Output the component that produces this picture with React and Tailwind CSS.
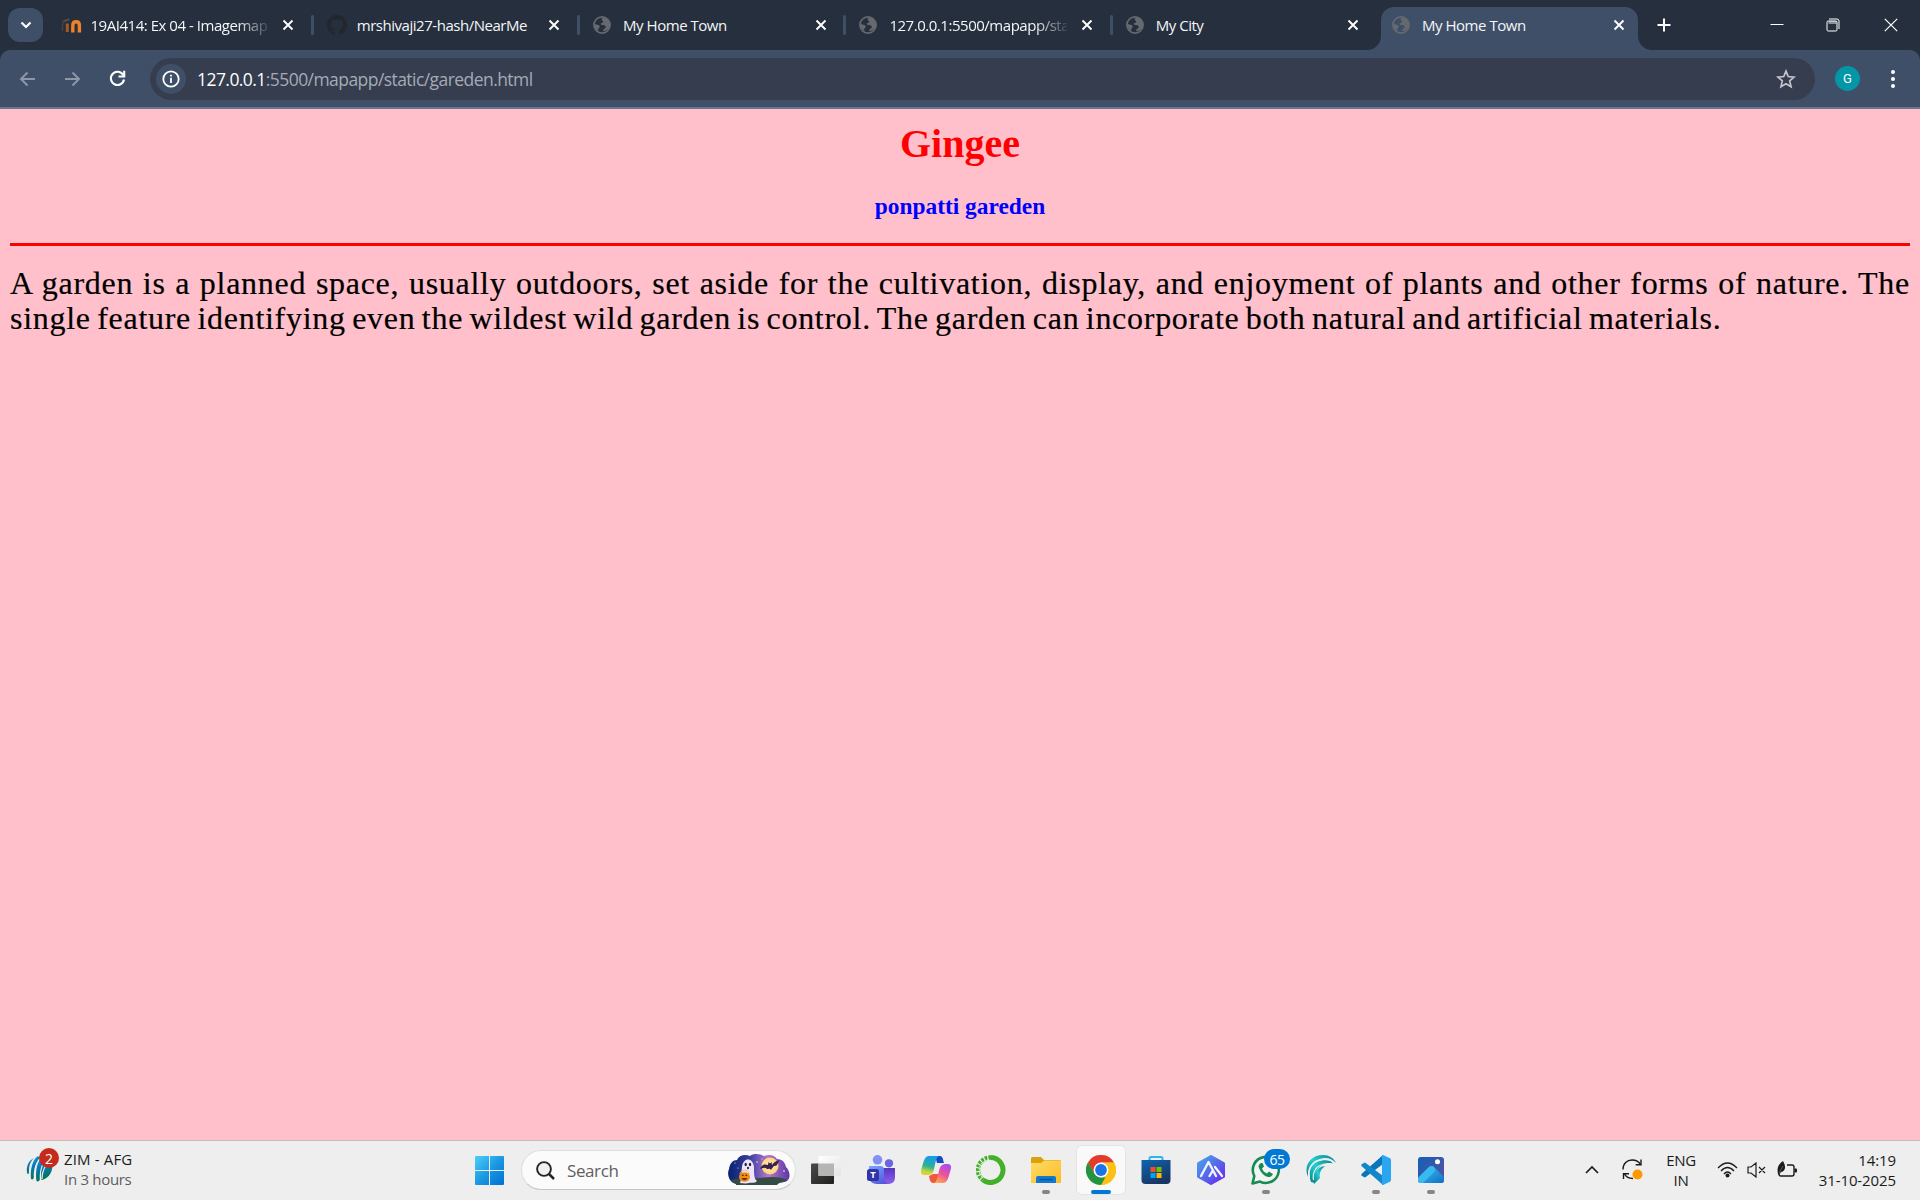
import React from "react";

const tabs = [
  { title: "19AI414: Ex 04 - Imagemap", icon: "moodle", fade: true },
  { title: "mrshivaji27-hash/NearMe", icon: "github" },
  { title: "My Home Town", icon: "globe" },
  { title: "127.0.0.1:5500/mapapp/sta", icon: "globe", fade: true },
  { title: "My City", icon: "globe" },
  { title: "My Home Town", icon: "globe", active: true },
];

function Globe() {
  return (
    <svg width="18" height="18" viewBox="0 0 18 18">
      <circle cx="9" cy="9" r="8.1" fill="none" stroke="#66696e" strokeWidth="1.7" />
      <path d="M10.2 1.2C8.4 2.4 8 3.6 9.3 4.5c1.4.9 1.2 2.2-.4 2.4-1.6.2-1.5 1.4-.4 1.9 1.6.6 3.4.2 4.1 1.5.5 1-.1 2-1.1 2.3-1.2.4-.9 1.6-1.4 2.6C14 14.7 17 12.5 17 9c0-4-2.8-7.2-6.8-7.8Z" fill="#66696e" />
      <path d="M1.4 8.2c2 .1 4.2.4 5 1.6.7 1.1.2 2-.7 2.5-.8.5-.3 1.500-.2 2.7C2.800 13.800 1.200 11.300 1.400 8.200Z" fill="#66696e" />
    </svg>
  );
}

function Favicon({ kind }) {
  if (kind === "moodle")
    return (
      <svg width="21" height="17" viewBox="0 0 21 17">
        <path d="M1.500 14V8.500c0-2 .6-3.500 2-4" fill="none" stroke="#46403f" strokeWidth="1.600" />
        <path d="M1 3.800 7.500 1.500l1.500 1.500-4.500 1.800Z" fill="#55504f" />
        <path d="M6.300 15V6.500" stroke="#a85624" strokeWidth="3" />
        <path d="M11.800 15.500V8.500c0-2.300 1.200-3.700 3.300-3.700s3.300 1.400 3.300 3.700v7" fill="none" stroke="#ef8127" strokeWidth="3.400" />
      </svg>
    );
  if (kind === "github")
    return (
      <svg width="20" height="20" viewBox="0 0 16 16">
        <path fill="#22272e" d="M8 0C3.58 0 0 3.58 0 8c0 3.54 2.290 6.530 5.470 7.590.4.070.550-.170.550-.380 0-.190-.010-.820-.010-1.490-2.010.370-2.530-.490-2.690-.940-.090-.230-.480-.940-.820-1.130-.280-.150-.680-.520-.010-.530.630-.010 1.080.580 1.230.820.720 1.210 1.870.870 2.330.660.070-.520.280-.870.510-1.070-1.780-.2-3.640-.890-3.640-3.950 0-.870.310-1.590.820-2.150-.080-.2-.360-1.020.080-2.120 0 0 .670-.210 2.200.820.640-.180 1.320-.270 2-.270s1.360.090 2 .270c1.530-1.040 2.200-.820 2.200-.820.440 1.100.160 1.920.080 2.120.510.560.820 1.270.820 2.150 0 3.070-1.870 3.750-3.650 3.950.290.250.540.730.540 1.480 0 1.070-.010 1.930-.010 2.200 0 .210.150.460.550.380A8.01 8.010 0 0 0 16 8c0-4.420-3.580-8-8-8Z" />
      </svg>
    );
  return <Globe />;
}

function Tab({ tab }) {
  return (
    <div className="relative flex h-full w-[266.3px] shrink-0 items-end">
      {tab.active && (
        <>
          <div className="absolute top-[7px] left-[3.5px] h-[43px] w-[257.500px] rounded-t-[13px] bg-[#404f68]" />
          <svg className="absolute bottom-0 left-[-10.500px]" width="14" height="14"><path d="M14 0A14 14 0 0 1 0 14H14Z" fill="#404f68" /></svg>
          <svg className="absolute bottom-0 left-[261px]" width="14" height="14"><path d="M0 0A14 14 0 0 0 14 14H0Z" fill="#404f68" /></svg>
        </>
      )}
      <div className="relative flex h-[50px] w-full items-center pl-[14.500px]">
        <span className="flex w-[30px] shrink-0 items-center"><Favicon kind={tab.icon} /></span>
        <span className={"w-[178px] overflow-hidden whitespace-nowrap text-[15px] tracking-[-0.47px] text-[#f3f5f8] " + (tab.fade ? "[mask-image:linear-gradient(to_right,black_82%,transparent_102%)]" : "")}>
          {tab.title}
        </span>
        <svg className="ml-[13.500px]" width="12" height="12" viewBox="0 0 12 12"><path d="m1.500 1.500 9 9m0-9-9 9" stroke="#fff" strokeWidth="1.900" /></svg>
      </div>
    </div>
  );
}

function Separator() {
  return <div className="-mx-[1.500px] h-5 w-[3px] shrink-0 rounded-full bg-[#404f68]" />;
}

function BrowserChrome() {
  return (
    <header className="h-[109px] bg-[#262f3d]">
      <div className="flex h-[50px] items-center pl-2">
        <button className="flex h-[34px] w-[35px] shrink-0 items-center justify-center rounded-[12px] bg-[#404f68]">
          <svg width="12" height="8" viewBox="0 0 12 8"><path d="m1.500 1.500 4.500 4.500 4.500-4.500" fill="none" stroke="#fff" strokeWidth="2.200" /></svg>
        </button>
        <div className="ml-[3px] flex h-full items-center">
          {tabs.map((t, i) => (
            <React.Fragment key={i}>
              <Tab tab={t} />
              {i < 4 && <Separator />}
            </React.Fragment>
          ))}
        </div>
        <svg className="ml-[13px] shrink-0" width="14" height="14" viewBox="0 0 14 14"><path d="M7 .5v13M.5 7h13" stroke="#fff" strokeWidth="2" /></svg>
        <div className="ml-auto flex items-center pr-[22px]">
          <svg className="mr-[42px]" width="14" height="14" viewBox="0 0 14 14"><path d="M.5 6.500h13" stroke="#fff" /></svg>
          <svg className="mr-[44px]" width="14" height="14" viewBox="0 0 14 14">
            <rect x="2.500" y="3" width="8" height="3" fill="#8b919b" />
            <rect x="1" y="3" width="10" height="10" rx="1.200" fill="none" stroke="#fff" />
            <path d="M3 1h8a2 2 0 0 1 2 2v8" fill="none" stroke="#fff" />
          </svg>
          <svg width="14" height="14" viewBox="0 0 14 14"><path d="m.8.8 12.400 12.400m0-12.400L.8 13.200" stroke="#fff" strokeWidth="1.200" /></svg>
        </div>
      </div>
      <div className="flex h-[59px] items-center rounded-t-[10px] border-b-2 border-[#69788f] bg-[#404f68]">
        <svg className="ml-[19px]" width="17" height="16" viewBox="0 0 17 16"><path d="M16 8H2m6.500-6.500L2 8l6.500 6.500" fill="none" stroke="#8d97a6" strokeWidth="1.900" /></svg>
        <svg className="ml-[28px]" width="17" height="16" viewBox="0 0 17 16"><path d="M1 8h14M8.500 1.500 15 8l-6.500 6.500" fill="none" stroke="#8d97a6" strokeWidth="1.900" /></svg>
        <svg className="ml-[28px]" width="17" height="17" viewBox="0 0 17 17">
          <path d="M14.300 5.200A6.600 6.600 0 1 0 15 9.500" fill="none" stroke="#fff" strokeWidth="2.100" />
          <path d="M15.200.8V6.500H9.500" fill="none" stroke="#fff" strokeWidth="2.100" />
        </svg>
        <div className="ml-[24px] flex h-[42px] w-[1665px] items-center rounded-full bg-[#353d4e]">
          <span className="ml-[6px] flex size-[30px] items-center justify-center rounded-full bg-[#404f68]">
            <svg width="18" height="18" viewBox="0 0 18 18">
              <circle cx="9" cy="9" r="7.700" fill="none" stroke="#fff" strokeWidth="1.800" />
              <path d="M9 7.800v5.200M9 4.700v1.800" stroke="#fff" strokeWidth="1.800" />
            </svg>
          </span>
          <span className="mt-[2px] ml-[11px] text-[17.500px] tracking-[-0.56px] whitespace-nowrap text-[#a5abb6]"><span className="text-white">127.0.0.1</span>:5500/mapapp/static/gareden.html</span>
          <svg className="mr-[19px] ml-auto" width="20" height="20" viewBox="0 0 24 24"><path d="m12 2.500 2.700 6.600 7.100.6-5.400 4.600 1.700 7L12 17.600l-6.100 3.700 1.700-7-5.400-4.600 7.100-.6Z" fill="none" stroke="#c5c6ca" strokeWidth="2" /></svg>
        </div>
        <span className="ml-[20px] flex size-[25px] items-center justify-center rounded-full bg-[#0296a6] font-['Roboto'] text-[13px] text-white">G</span>
        <svg className="ml-[30px]" width="6" height="20" viewBox="0 0 6 20"><g fill="#fff"><circle cx="3" cy="3" r="2" /><circle cx="3" cy="10" r="2" /><circle cx="3" cy="17" r="2" /></g></svg>
      </div>
    </header>
  );
}

function Page() {
  return (
    <main className="flex h-[1031px] flex-col bg-[#ffc0cb] px-[10px] font-['Liberation_Serif',serif]">
      <h1 className="mt-[12px] text-center text-[40px] leading-[46px] font-bold text-[#ff0000]">Gingee</h1>
      <h3 className="mt-[26px] text-center text-[23.400px] leading-[27px] font-bold text-[#0000ff]">ponpatti gareden</h3>
      <div className="mt-[23px] h-[3px] shrink-0 bg-[#ff0000]" />
      <div className="mt-[20px] text-[32px] leading-[35px] tracking-[0.72px] text-black [word-spacing:-4px] [-webkit-text-stroke:0.2px_black]">
        <p className="text-justify [text-align-last:justify]">A garden is a planned space, usually outdoors, set aside for the cultivation, display, and enjoyment of plants and other forms of nature. The</p>
        <p className="w-[1711.500px] text-justify [text-align-last:justify]">single feature identifying even the wildest wild garden is control. The garden can incorporate both natural and artificial materials.</p>
      </div>
    </main>
  );
}

function Cricket() {
  return (
    <svg width="28" height="29" viewBox="0 0 28 29">
      <defs><linearGradient id="ck" x1="0" y1="0" x2=".3" y2="1"><stop offset="0" stopColor="#16a5d8" /><stop offset=".45" stopColor="#0878b8" /><stop offset="1" stopColor="#05734c" /></linearGradient></defs>
      <g fill="url(#ck)">
        <path d="M5 6C1 9 0 16 1.500 20c1.300.3 1.500-1 1.500-3C3 12 4 8 8 4Z" />
        <path d="M11 2.500C6 7 4 17 5 25c1.500 1 2.800 0 2.800-2C7.500 15 9.500 8 15 2.500Z" />
        <path d="M15 4C10 10 9.500 20 10.500 27c1.500 1 3.300 0 3.300-2C13.500 17 15 10 20 4Z" />
        <path d="M20 5c-4 6-6 14-4.500 21C21 25 26 20 26.500 12c0-5-2-7-6.500-7Z" />
      </g>
      <path d="M20 11c-3 5-4 10-4 14" stroke="#eee" strokeWidth="1.200" fill="none" />
    </svg>
  );
}

function Halloween() {
  return (
    <svg width="62" height="32" viewBox="0 0 62 32">
      <defs>
        <linearGradient id="hw"><stop offset="0" stopColor="#072270" /><stop offset=".35" stopColor="#3a3f9c" /><stop offset=".65" stopColor="#b477d2" /><stop offset="1" stopColor="#5b37a0" /></linearGradient>
        <radialGradient id="mn"><stop offset="0" stopColor="#fff3b0" /><stop offset="1" stopColor="#ffcf7c" /></radialGradient>
      </defs>
      <path d="M8 30C0 28-1 19 1 15 2 9 5 6 9 6c2-5 8-6 13-4 4-3 10-2 14 0 6-2 10-1 13 3 6 0 8 4 9 8 4 4 5 11 1 14-3 2-8 1-10 3Z" fill="url(#hw)" />
      <path d="M3 26c10-3 18-1 28-2s20-2 28 2c-2 3-7 1-10 5H8c1-3-4-1-5-5Z" fill="#344c43" />
      <circle cx="42" cy="12" r="8.500" fill="url(#mn)" />
      <path d="M32 15c2-5 5-5 8-4l.5-3 1.500 1.500L43.500 8l.5 3c2-3 4-4 8-5-2 2-2 4-4 6-2-1-3 1-5 4-1-2-3-1-4-1-2-2-4-1-7 0Z" fill="#35214f" />
      <path d="M12 29c2-5 1-10 2-16 1-10 11-10 12 0 0 7 0 12 3 14-3 3-6 1-8 2-4 1-6 0-9 0Z" fill="#eee5fb" />
      <ellipse cx="17.700" cy="10.500" rx="1.200" ry="1.700" fill="#222043" /><ellipse cx="22" cy="10.500" rx="1.200" ry="1.700" fill="#222043" />
      <ellipse cx="20" cy="14" rx="1" ry="1.300" fill="#222043" />
      <path d="M12 20c1-5 8-5 9 0" fill="none" stroke="#f7b661" strokeWidth="1" />
      <ellipse cx="16.500" cy="23" rx="5.500" ry="4.800" fill="#f38b17" />
      <path d="m13.500 22 1.500-2 1 2Zm3.500 0 1.300-2 1.200 2Zm-3.500 2c2 3 4 3 6 0Z" fill="#683109" />
      <g fill="#fff"><circle cx="7" cy="9" r=".6" /><circle cx="10" cy="14" r=".5" /><circle cx="29" cy="8" r=".7" /><circle cx="56" cy="17" r=".8" /><circle cx="34" cy="5" r=".5" /></g>
    </svg>
  );
}

const icons = {
  tasks: (
    <svg width="30" height="30" viewBox="0 0 30 30">
      <defs><linearGradient id="tk" x1="0" y1="0" x2="1" y2="1"><stop offset="0" stopColor="#4b4a48" /><stop offset="1" stopColor="#20201e" /></linearGradient><linearGradient id="tw" x1="0" y1="0" x2="1" y2="1"><stop offset="0" stopColor="#fff" /><stop offset="1" stopColor="#e4e4e4" /></linearGradient></defs>
      <rect x="0" y="8.500" width="23" height="20.500" rx="1" fill="url(#tk)" />
      <rect x="7.500" y="1" width="22.500" height="20" rx="1" fill="url(#tw)" /><rect x="7.500" y="8.500" width="15.500" height="12.500" fill="#b5b5b4" />
    </svg>
  ),
  teams: (
    <svg width="30" height="30" viewBox="0 0 30 30">
      <defs><linearGradient id="tm" x1="0" y1="0" x2=".6" y2="1"><stop offset="0" stopColor="#78a8ff" /><stop offset="1" stopColor="#5759dd" /></linearGradient><linearGradient id="tp" x1="0" y1="0" x2="0" y2="1"><stop offset="0" stopColor="#5636bd" /><stop offset="1" stopColor="#8c60ee" /></linearGradient></defs>
      <circle cx="11.500" cy="4.800" r="4.800" fill="#8390f7" /><circle cx="23" cy="8.300" r="4.100" fill="#6966e3" />
      <path d="M17 13h12v9c0 5-3 7-7 7h-5Z" fill="url(#tp)" /><path d="M3 11h11c3 0 4 1 4 4v7c0 3 1 5 4 7H11c-6 0-8-4-8-9Z" fill="url(#tm)" />
      <rect x="1" y="14" width="12" height="12" rx="2.500" fill="#3034a8" /><text x="7" y="23.200" textAnchor="middle" fontSize="9.500" fontWeight="700" fill="#fff">T</text>
    </svg>
  ),
  copilot: (
    <svg width="30" height="30" viewBox="0 0 30 30">
      <defs>
        <linearGradient id="ca" x1=".3" y1="0" x2=".1" y2="1"><stop offset="0" stopColor="#169cf0" /><stop offset=".5" stopColor="#2fb28e" /><stop offset=".8" stopColor="#cad63b" /><stop offset="1" stopColor="#f2c73b" /></linearGradient>
        <linearGradient id="cb" x1=".7" y1="0" x2=".2" y2="1"><stop offset="0" stopColor="#a94cf0" /><stop offset=".5" stopColor="#ed5299" /><stop offset="1" stopColor="#ffad50" /></linearGradient>
      </defs>
      <path d="M14 1h5c3 0 3 4 4 7h-7Z" fill="#1749c6" />
      <path d="M8 21c1 6 2 7 5 7h3l3-9h-7Z" fill="#ef5a3c" />
      <path d="M8 1h10c-3 1-3 5-5 13-1 5-3 6-7 6H3c-3 0-4-3-2-8C3 5 4 1 8 1Z" fill="url(#ca)" />
      <path d="M22 28H13c3-1 3-5 5-12 1-5 3-7 7-7h2c3 0 4 3 2 8-2 7-3 11-7 11Z" fill="url(#cb)" />
    </svg>
  ),
  anaconda: (
    <svg width="30" height="30" viewBox="0 0 30 30">
      <path d="M15 2.500A12.500 12.500 0 1 1 7 25" fill="none" stroke="#43b02a" strokeWidth="5" />
      <path d="M15 2.500A12.500 12.500 0 0 0 7 25" fill="none" stroke="#43b02a" strokeWidth="4.500" strokeDasharray="2.600 1.100" />
      <path d="M13 4.500A10.500 10.500 0 0 0 7 23" fill="none" stroke="#eee" strokeWidth="1" strokeDasharray="2 1.500" />
    </svg>
  ),
  folder: (
    <svg width="30" height="30" viewBox="0 0 30 30">
      <defs><linearGradient id="fd" x1="0" y1="0" x2="1" y2="1"><stop offset="0" stopColor="#ffdb68" /><stop offset="1" stopColor="#fbbd25" /></linearGradient></defs>
      <path d="M0 3.500Q0 2 1.500 2H10l3 3h15.500Q30 5 30 6.500V12H0Z" fill="#dca009" /><path d="M0 8h10l3-2.500h17V28H0Z" fill="url(#fd)" />
      <path d="M5 28v-5q0-2 2-2h16q2 0 2 2v5Z" fill="#1179d0" /><path d="M8.500 24.500h13" stroke="#064e91" strokeWidth="1.300" />
    </svg>
  ),
  chrome: (
    <svg width="30" height="30" viewBox="0 0 30 30">
      <circle cx="15" cy="15" r="15" fill="#fbc116" />
      <path d="M2 7.500A15 15 0 0 1 28 7.500H15L8.500 18.750Z" fill="#e33b2e" />
      <path d="M2 7.500 8.500 18.750 15 22.500h6.500L15 30A15 15 0 0 1 2 7.500Z" fill="#229342" />
      <path d="M15 30 21.500 18.750 15 7.500H28A15 15 0 0 1 15 30Z" fill="#fbc116" />
      <circle cx="15" cy="15" r="7.400" fill="#fff" /><circle cx="15" cy="15" r="5.900" fill="#1a73e8" />
    </svg>
  ),
  store: (
    <svg width="30" height="30" viewBox="0 0 30 30">
      <defs><linearGradient id="st" x1="0" y1="0" x2=".5" y2="1"><stop offset="0" stopColor="#0d65b3" /><stop offset="1" stopColor="#193563" /></linearGradient></defs>
      <path d="M8.500 7V3.500Q8.500 2 10 2h10q1.500 0 1.500 1.500V7" fill="none" stroke="#28b5f0" strokeWidth="2" /><path d="M.5 5h29v20q0 4-4 4h-21q-4 0-4-4Z" fill="url(#st)" />
      <path d="M9.500 12h5v5h-5Z" fill="#f25022" /><path d="M15.500 12h5v5h-5Z" fill="#7fba00" /><path d="M9.500 18h5v5h-5Z" fill="#00a4ef" /><path d="M15.500 18h5v5h-5Z" fill="#ffb900" />
    </svg>
  ),
  hex: (
    <svg width="30" height="30" viewBox="0 0 30 30">
      <defs><linearGradient id="hx" x1="0" y1="0" x2="1" y2="1"><stop offset="0" stopColor="#49a5ec" /><stop offset=".5" stopColor="#536ae9" /><stop offset="1" stopColor="#6c22f0" /></linearGradient></defs>
      <path d="m15 1.500 12.500 7v13L15 28.500l-12.500-7v-13Z" fill="url(#hx)" stroke="url(#hx)" strokeWidth="3" strokeLinejoin="round" />
      <path d="m5 21 7.500-14 7.500 14M13.500 21l3-5m2.500-4 7 9" fill="none" stroke="#f4f4ff" strokeWidth="2.300" strokeLinejoin="round" strokeLinecap="round" />
    </svg>
  ),
  whatsapp: (
    <svg width="30" height="30" viewBox="0 0 30 30">
      <path d="M1.500 28.500 3.300 21A13 13 0 1 1 9 26.600Z" fill="#f3f3f3" stroke="#168b54" strokeWidth="2.600" strokeLinejoin="round" />
      <path d="M10 8c-2 1-3 3-2 5 2 5 5 8 9 9 2 .5 4-1 5-3l-4-2.500-2 2c-3-1-4-3-5-5l2-2L11.500 8Z" fill="#168b54" />
    </svg>
  ),
  wave: (
    <svg width="30" height="30" viewBox="0 0 30 30">
      <defs><linearGradient id="wv" x1="1" y1="0" x2="0" y2="1"><stop offset="0" stopColor="#087f91" /><stop offset=".5" stopColor="#24d0ce" /><stop offset="1" stopColor="#077d8c" /></linearGradient></defs>
      <path d="M2 22C-3 10 5 0 17 0c6 0 11 3 13 8-5-5-10-6-16-4C6 6 1 13 2 22Z" fill="url(#wv)" />
      <path d="M5 27C1 17 5 7 16 5.500c5-.7 9 .5 11 3-4-1-8-.5-11 1.500-6 4-8 9-7 18Z" fill="url(#wv)" />
      <path d="M8 29C6 21 10 12 19 11c-4 3-6 7-5 12Z" fill="url(#wv)" />
      <path d="M3.500 23C1 13 7 5 17 4.500M7.500 25C6 16 11 10 19 9" fill="none" stroke="#eee" strokeWidth="1.200" />
    </svg>
  ),
  vscode: (
    <svg width="30" height="30" viewBox="0 0 30 30">
      <path d="M22 0v9L4 22.500 1 21q-1.500-1 0-2.500Z" fill="#0876b9" /><path d="M22 30v-9L4 7.500 1 9q-1.500 1 0 2.500Z" fill="#1387cc" />
      <path d="m22 0 6.500 3Q30 3.700 30 5v20q0 1.300-1.500 2L22 30q-1 .5-1-1V1q0-1.500 1-1Z" fill="#29a5f2" />
    </svg>
  ),
  photos: (
    <svg width="30" height="30" viewBox="0 0 30 30">
      <defs><linearGradient id="ph" x1="0" y1="0" x2="1" y2=".7"><stop offset="0" stopColor="#1260b5" /><stop offset="1" stopColor="#5252a5" /></linearGradient><linearGradient id="pm" x1="0" y1="0" x2="1" y2="1"><stop offset="0" stopColor="#3bc9f8" /><stop offset="1" stopColor="#126dc7" /></linearGradient></defs>
      <rect x="2" y="2" width="26" height="26" rx="3" fill="url(#ph)" /><path d="M2 23 13 12q2.500-2 5 0l10 10v3q0 3-3 3H5q-3 0-3-3Z" fill="url(#pm)" /><path d="m13 12-11 11v3l2 2h3l11-11q2-3 0-5-2.500-2-5 0Z" fill="#38b9ef" />
      <circle cx="21.500" cy="6.800" r="2.500" fill="#fff" />
    </svg>
  ),
};

const apps = [
  { k: "tasks" }, { k: "teams" }, { k: "copilot" }, { k: "anaconda" }, { k: "folder", run: true }, { k: "chrome", active: true },
  { k: "store" }, { k: "hex" }, { k: "whatsapp", run: true, badge: "65" }, { k: "wave" }, { k: "vscode", run: true }, { k: "photos", run: true },
];

function AppButton({ app }) {
  return (
    <div className="flex w-[55px] justify-center">
      <div className={"relative flex h-[48px] w-[48px] items-center justify-center rounded-[5px] " + (app.active ? "bg-[#f9f9f9] shadow-[0_0_0_1px_#e4e4e4]" : "")}>
        {icons[app.k]}
        {app.badge && <span className="absolute top-[3px] left-[22px] flex h-5 w-[26px] items-center justify-center rounded-full bg-[#0078d4] text-[14px] tracking-[-0.4px] text-white">{app.badge}</span>}
        {app.active && <span className="absolute bottom-0 h-[4px] w-[20px] rounded-full bg-[#0078d4]" />}
        {app.run && <span className="absolute bottom-0 h-[4px] w-[8px] rounded-full bg-[#868686]" />}
      </div>
    </div>
  );
}

function Taskbar() {
  return (
    <footer className="flex h-[60px] items-start border-t border-[#bfbfbf] bg-[#eeeeee] text-[15px] text-[#1b1b1b]">
      <div className="flex w-[475px] pl-[26px]">
        <div className="relative mt-[13px] w-[28px]">
          <Cricket />
          <span className="absolute top-[-6px] left-[13px] flex size-5 items-center justify-center rounded-full bg-[#c42b1c] text-[14px] text-white">2</span>
        </div>
        <div className="mt-[8px] ml-[10px] leading-5 whitespace-nowrap">
          <div className="tracking-[0.15px]">ZIM - AFG</div>
          <div className="tracking-[-0.3px] text-[#5d5d5d]">In 3 hours</div>
        </div>
      </div>
      <svg className="mt-[15px] shrink-0" width="29" height="29" viewBox="0 0 29 29">
        <defs><linearGradient id="win" x1="0" y1="0" x2="1" y2="1"><stop offset="0" stopColor="#4cd0fa" /><stop offset=".5" stopColor="#1b98e3" /><stop offset="1" stopColor="#0070cf" /></linearGradient></defs>
        <path d="M1 0h13v14H0V1Q0 0 1 0Zm14 0h13q1 0 1 1v13H15ZM0 15h14v14H1q-1 0-1-1Zm15 0h14v13q0 1-1 1H15Z" fill="url(#win)" />
      </svg>
      <div className="mt-[9px] ml-[17px] flex h-[40px] w-[275px] shrink-0 items-center rounded-full border border-[#dedede] border-b-[#c6c6c6] bg-[#fbfbfb] pl-[14px]">
        <svg width="19" height="19" viewBox="0 0 19 19"><circle cx="8" cy="8" r="6.900" fill="#f1f1f1" stroke="#252525" strokeWidth="1.900" /><path d="m13 13 5 5" stroke="#252525" strokeWidth="2.500" /></svg>
        <span className="mt-[2px] ml-[12px] text-[17px] tracking-[-0.4px] text-[#5f5f5f]">Search</span>
        <span className="mr-[5px] ml-auto"><Halloween /></span>
      </div>
      <nav className="mt-[5px] ml-[2.500px] flex">
        {apps.map((a) => <AppButton key={a.k} app={a} />)}
      </nav>
      <div className="ml-auto flex h-[57px] items-center pr-[24px]">
        <svg className="mr-[23px]" width="14" height="9" viewBox="0 0 14 9"><path d="m1 8 6-6 6 6" fill="none" stroke="#1b1b1b" strokeWidth="1.700" /></svg>
        <svg className="shrink-0" width="21" height="21" viewBox="0 0 21 21">
          <g fill="none" stroke="#1b1b1b" strokeWidth="1.400">
            <path d="M1 10.500C1 4.500 5 1 10 1c4 0 7 1.800 8.500 4.500" />
            <path d="M19 .5v5.300h-5.300" />
            <path d="M11 19.500c-4 0-7-1.500-8.500-4.500" />
            <path d="M1.500 20v-5.200H7" />
          </g>
          <circle cx="15.500" cy="15.500" r="5" fill="#ff9800" />
        </svg>
        <div className="ml-[16px] w-[44px] text-center leading-5 tracking-[-0.3px]">ENG<br />IN</div>
        <svg className="ml-[14px]" width="21" height="16" viewBox="0 0 21 16"><g fill="none" stroke="#1b1b1b" strokeWidth="1.300"><path d="M1 6q9.500-10 19 0M4 9q6.500-7 13 0M7 12q3.500-4 7 0" /></g><circle cx="10.500" cy="13.500" r="2" fill="#1b1b1b" /></svg>
        <svg className="ml-[9px]" width="20" height="16" viewBox="0 0 20 16"><path d="M1 5h3l5-4v14l-5-4H1Zm11 0 6 6m0-6-6 6" fill="none" stroke="#1b1b1b" strokeWidth="1.200" /></svg>
        <svg className="ml-[10px]" width="21" height="17" viewBox="0 0 21 17"><path d="M10 4h5q2 0 2 2v7q0 2-2 2H4q-2 0-2-2" fill="none" stroke="#1b1b1b" strokeWidth="1.400" /><path d="M17.500 7.500H19q1 0 1 1v2q0 1-1 1h-1.500Z" fill="#1b1b1b" /><path d="M1 13C-.5 6 2 3 6 0c3 5 3 10-2 11l-2 3Z" fill="#1b1b1b" /><path d="M2 12 6 5" stroke="#777" strokeWidth=".7" /></svg>
        <div className="ml-[19px] w-[79px] text-right leading-5 tracking-[-0.1px] whitespace-nowrap">14:19<br />31-10-2025</div>
      </div>
    </footer>
  );
}

export default function App() {
  return (
    <div className="h-[1200px] w-[1920px] overflow-hidden font-['Open_Sans','Noto_Sans',sans-serif]">
      <BrowserChrome />
      <Page />
      <Taskbar />
    </div>
  );
}
